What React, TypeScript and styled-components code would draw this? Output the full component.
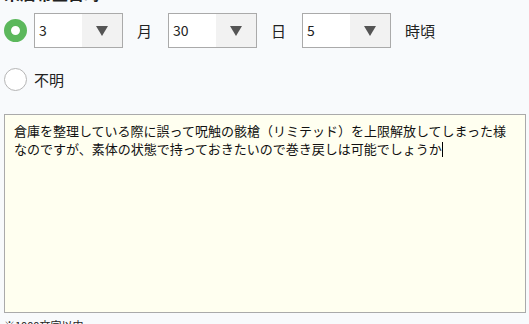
import styled, { createGlobalStyle } from "styled-components";

const Global = createGlobalStyle`
	body {
		margin: 0;
		background: #f8fafc;
		font-family: "Noto Sans CJK JP", "Noto Sans", sans-serif;
		color: #222;
		overflow: hidden;
	}
`;

const Page = styled.div`
	padding: 0 3px 0 4px;
	display: flex;
	flex-direction: column;
`;
const Heading = styled.h2`
	margin: -17px 0 0;
	font-size: 16px;
	line-height: 20px;
	font-weight: bold;
`;
const Row = styled.div<{ $top: number }>`
	margin-top: ${(p) => p.$top}px;
	display: flex;
	align-items: center;
	height: 35px;
`;
const Radio = styled.span<{ $checked?: boolean }>`
	width: 23px;
	height: 23px;
	box-sizing: border-box;
	border-radius: 50%;
	flex-shrink: 0;
	margin-right: 7px;
	background: #fff;
	border: ${(p) => (p.$checked ? "7.5px solid #5cb85c" : "1px solid #b5b5b5")};
`;
const SelectBox = styled.div`
	width: 89px;
	height: 35px;
	box-sizing: border-box;
	border: 1px solid #aaa;
	background: #fff;
	display: flex;
`;
const Value = styled.span`
	flex: 1;
	padding-left: 4px;
	font-size: 14px;
	line-height: 33px;
`;
const Arrow = styled.span`
	width: 40px;
	background: #f2f2f2;
	display: flex;
	align-items: center;
	justify-content: center;
	&::after {
		content: "";
		border-left: 6px solid transparent;
		border-right: 6px solid transparent;
		border-top: 10px solid #555;
	}
`;
const Label = styled.span`
	font-size: 15px;
	margin: 0 16px 0 14px;
`;
const Plain = styled.span`
	font-size: 15px;
`;
const TextBox = styled.div`
	margin-top: 17px;
	width: 522px;
	height: 199px;
	box-sizing: border-box;
	border: 1px solid #aaa;
	background: #fffff0;
	padding: 7px 9px;
	font-size: 13px;
	line-height: 18px;
	color: #111;
`;
const Caret = styled.span`
	display: inline-block;
	width: 1px;
	height: 15px;
	background: #000;
	vertical-align: -3px;
`;
const Note = styled.p`
	margin: 5px 0 0;
	font-size: 11px;
	line-height: 14px;
`;

function Select({ value }: { value: string }) {
	return (
		<SelectBox>
			<Value>{value}</Value>
			<Arrow />
		</SelectBox>
	);
}

export default function App() {
	return (
		<>
			<Global />
			<Page>
				<Heading>来店希望日時</Heading>
				<Row $top={10}>
					<Radio $checked />
					<Select value="3" />
					<Label>月</Label>
					<Select value="30" />
					<Label>日</Label>
					<Select value="5" />
					<Label>時頃</Label>
				</Row>
				<Row $top={14}>
					<Radio />
					<Plain>不明</Plain>
				</Row>
				<TextBox>
					倉庫を整理している際に誤って呪触の骸槍（リミテッド）を上限解放してしまった様なのですが、素体の状態で持っておきたいので巻き戻しは可能でしょうか
					<Caret />
				</TextBox>
				<Note>※1000文字以内</Note>
			</Page>
		</>
	);
}
